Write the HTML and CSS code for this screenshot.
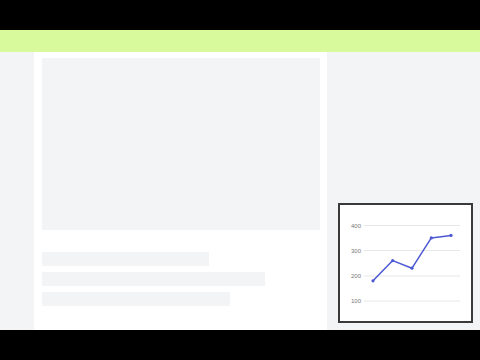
FILE: index.html
```html
<!DOCTYPE html>
<html>
<head>
<meta charset="utf-8">
<link rel="stylesheet" href="styles.css">
</head>
<body>
<div class="page">
  <div class="letterbox"></div>
  <div class="topbar"></div>
  <div class="main">
    <div class="side"></div>
    <div class="content">
      <div class="hero"></div>
      <div class="lines">
        <div class="line l1"></div>
        <div class="line l2"></div>
        <div class="line l3"></div>
      </div>
    </div>
    <div class="aside">
      <div class="chart">
        <svg width="131" height="116" viewBox="0 0 131 116">
          <g class="grid">
            <line x1="24" y1="20.5" x2="120" y2="20.5"/>
            <line x1="24" y1="45.5" x2="120" y2="45.5"/>
            <line x1="24" y1="71" x2="120" y2="71"/>
            <line x1="24" y1="96" x2="120" y2="96"/>
          </g>
          <g class="labels">
            <text x="21" y="22.5">400</text>
            <text x="21" y="47.5">300</text>
            <text x="21" y="73">200</text>
            <text x="21" y="98">100</text>
          </g>
          <polyline class="series" points="33,75.8 52.7,55.6 72,63.2 91.3,32.9 111,30.4"/>
          <g class="dots">
            <circle cx="33" cy="75.8" r="1.6"/>
            <circle cx="52.7" cy="55.6" r="1.6"/>
            <circle cx="72" cy="63.2" r="1.6"/>
            <circle cx="91.3" cy="32.9" r="1.6"/>
            <circle cx="111" cy="30.4" r="1.6"/>
          </g>
        </svg>
      </div>
    </div>
  </div>
  <div class="letterbox"></div>
</div>
</body>
</html>
```
FILE: styles.css
```css
html, body {
  margin: 0;
  padding: 0;
  background: #000;
  font-family: "Inter", "Liberation Sans", sans-serif;
}
.page {
  width: 480px;
  height: 360px;
  display: flex;
  flex-direction: column;
}
.letterbox {
  height: 30px;
  background: #000;
  flex: none;
}
.topbar {
  height: 22px;
  background: #d9f99d;
  flex: none;
}
.main {
  flex: 1;
  display: flex;
  background: #f3f4f6;
}
.side {
  width: 34px;
  flex: none;
}
.content {
  width: 293px;
  flex: none;
  background: #fff;
  box-sizing: border-box;
  padding: 6px 7px 0 8px;
  display: flex;
  flex-direction: column;
}
.hero {
  height: 172px;
  background: #f3f4f6;
}
.lines {
  margin-top: 22px;
  display: flex;
  flex-direction: column;
  gap: 6px;
}
.line {
  height: 14px;
  background: #f3f4f6;
}
.l1 { width: 167px; }
.l2 { width: 223px; }
.l3 { width: 188px; }
.aside {
  flex: 1;
  display: flex;
  justify-content: flex-end;
  align-items: flex-end;
  padding: 0 7px 7px 0;
}
.chart {
  width: 135px;
  height: 120px;
  box-sizing: border-box;
  border: 2px solid #3a3a3a;
  background: #fff;
}
.chart svg {
  display: block;
}
.grid line {
  stroke: #e8e8e8;
  stroke-width: 1;
}
.labels text {
  font-family: "Liberation Sans", sans-serif;
  font-size: 6px;
  fill: #777;
  text-anchor: end;
}
.series {
  fill: none;
  stroke: #4c58d2;
  stroke-width: 1.5;
  stroke-linejoin: round;
}
.dots circle {
  fill: #4c58d2;
}
```
